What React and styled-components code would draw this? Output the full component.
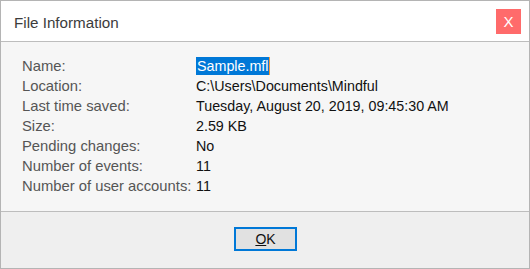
import React from "react";
import styled, { createGlobalStyle } from "styled-components";

const GlobalStyle = createGlobalStyle`
  html, body {
    margin: 0;
    padding: 0;
    background: #ffffff;
  }
  body {
    font-family: "Liberation Sans", Arial, sans-serif;
  }
`;

const Window = styled.div`
  width: 530px;
  height: 269px;
  box-sizing: border-box;
  border: 1px solid #b4b4b4;
  display: flex;
  flex-direction: column;
  background: #f6f6f6;
`;

const TitleBar = styled.header`
  height: 40px;
  background: #ffffff;
  border-bottom: 1px solid #bdbdbd;
  display: flex;
  align-items: center;
  justify-content: space-between;
  padding: 0 8px 0 13px;
`;

const Title = styled.h1`
  margin: 0;
  font-size: 15.2px;
  font-weight: normal;
  color: #3c3c3c;
  padding-top: 2px;
`;

const CloseButton = styled.button`
  width: 25px;
  height: 25px;
  border: none;
  padding: 0;
  background: #ff6b6b;
  color: #ffffff;
  font-family: "Liberation Sans", Arial, sans-serif;
  font-size: 15px;
  display: flex;
  align-items: center;
  justify-content: center;
  margin-top: 1px;
`;

const Details = styled.dl`
  margin: 0;
  flex: 1;
  display: grid;
  grid-template-columns: 174px 1fr;
  grid-auto-rows: 20px;
  align-content: start;
  padding: 14px 0 0 21px;
  border-bottom: 1px solid #bdbdbd;
`;

const Label = styled.dt`
  margin: 0;
  color: #555555;
  font-size: 14.8px;
  line-height: 20px;
  white-space: nowrap;
`;

const Value = styled.dd`
  margin: 0;
  color: #111111;
  font-size: 14.3px;
  line-height: 20px;
  white-space: nowrap;
`;

const Selected = styled.span`
  background: #0078d7;
  color: #ffffff;
  padding: 1px 0 1px 1px;
  border-right: 1px solid #f39a3c;
`;

const Footer = styled.footer`
  height: 56px;
  background: #efefef;
  display: flex;
  justify-content: center;
  align-items: flex-start;
  padding-top: 15px;
  box-sizing: border-box;
`;

const OkButton = styled.button`
  width: 63px;
  height: 24px;
  box-sizing: border-box;
  border: 2px solid #0078d7;
  background: #e1e1e1;
  color: #111111;
  font-family: "Liberation Sans", Arial, sans-serif;
  font-size: 14px;
  padding: 0;
  margin-left: 1px;
  u {
    text-decoration-thickness: 1px;
  }
`;

const rows = [
  ["Location:", "C:\\Users\\Documents\\Mindful"],
  ["Last time saved:", "Tuesday, August 20, 2019, 09:45:30 AM"],
  ["Size:", "2.59 KB"],
  ["Pending changes:", "No"],
  ["Number of events:", "11"],
  ["Number of user accounts:", "11"],
];

export default function App() {
  return (
    <>
      <GlobalStyle />
      <Window>
        <TitleBar>
          <Title>File Information</Title>
          <CloseButton>X</CloseButton>
        </TitleBar>
        <Details>
          <Label>Name:</Label>
          <Value>
            <Selected>Sample.mfl</Selected>
          </Value>
          {rows.map(([label, value]) => (
            <React.Fragment key={label}>
              <Label>{label}</Label>
              <Value>{value}</Value>
            </React.Fragment>
          ))}
        </Details>
        <Footer>
          <OkButton>
            <u>O</u>K
          </OkButton>
        </Footer>
      </Window>
    </>
  );
}
